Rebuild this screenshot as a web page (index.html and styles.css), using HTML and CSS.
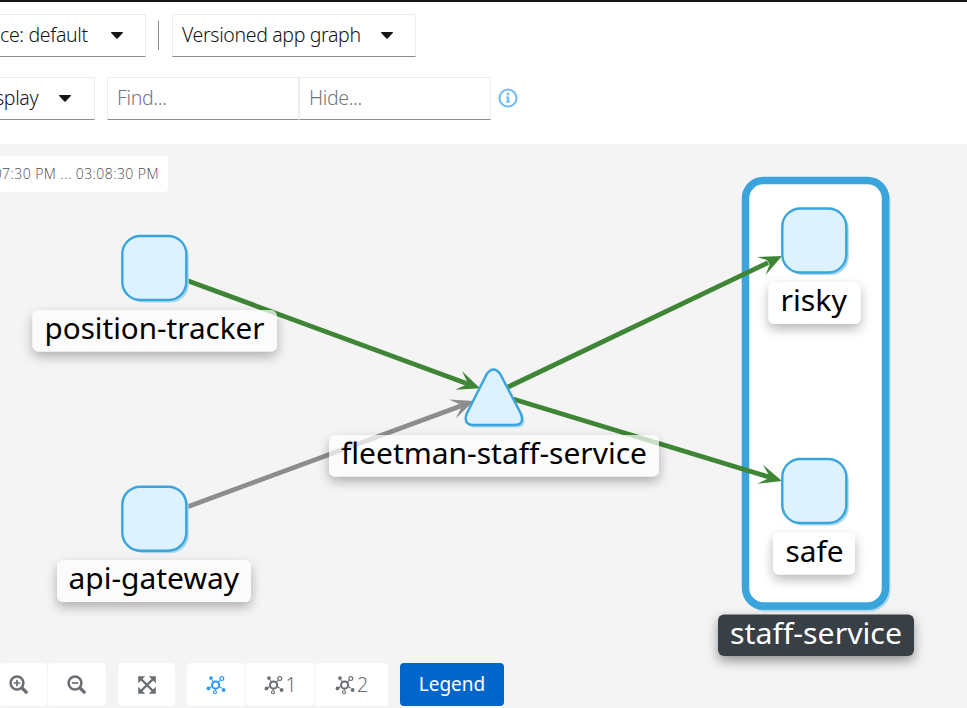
FILE: index.html
```html
<!DOCTYPE html>
<html lang="en">
<head>
<meta charset="utf-8">
<title>Graph</title>
<link rel="stylesheet" href="styles.css">
</head>
<body>
<svg class="defs" aria-hidden="true">
  <symbol id="caret" viewBox="0 0 12 7"><path d="M.6 0h10.8c.6 0 .8.6.4 1L6.6 6.5q-.6.6-1.2 0L.2 1C-.2.6 0 0 .6 0z" fill="currentColor"/></symbol>
  <symbol id="topology" viewBox="0 0 20 20">
    <g fill="none" stroke="currentColor">
      <circle cx="9.6" cy="10" r="3.6" stroke-width="2"/>
      <path d="M6 5l1.4 2M12.4 7.2l2-2M13 11.5l2.7 1.8M6.3 11.2l-3 1.6M9.3 14v1.5" stroke-width="1.1"/>
      <circle cx="15.8" cy="3.6" r="1.9" stroke-width="1.2"/>
      <circle cx="9" cy="17.2" r="1.5" stroke-width="1.1"/>
    </g>
    <g fill="currentColor"><circle cx="5" cy="3.1" r="1.9"/><circle cx="2.5" cy="13.4" r="1.9"/><circle cx="17.6" cy="15" r="1.9"/></g>
  </symbol>
</svg>
<header class="toolbar">
  <div class="row">
    <div class="control namespace"><span>ce: default</span><svg class="caret"><use href="#caret"/></svg></div>
    <i class="divider"></i>
    <div class="control graph-type"><span>Versioned app graph</span><svg class="caret"><use href="#caret"/></svg></div>
  </div>
  <div class="row">
    <div class="control display"><span>splay</span><svg class="caret"><use href="#caret"/></svg></div>
    <div class="control find"><span>Find...</span></div>
    <div class="control hide"><span>Hide...</span></div>
    <svg class="info" viewBox="0 0 20 20"><circle cx="10" cy="10" r="8.500" fill="none" stroke="currentColor" stroke-width="2.200"/><path d="M8.600 4.800h2.600v2.400H8.600zM8 8.400h3.200v4.800h1v1.500H7.800v-1.500h1V9.900H8z" fill="currentColor"/></svg>
  </div>
</header>
<main class="canvas">
  <svg class="graph" viewBox="0 144 967 564">
    <defs>
      <filter id="shadow" x="-20%" y="-50%" width="140%" height="240%"><feDropShadow dx="0" dy="5" stdDeviation="6" flood-color="#000" flood-opacity=".4"/></filter>
      <path id="arrow" d="M0 0L-23-10L-15-2.400V2.400L-23 10Z"/>
      <g id="node"><rect x="-29" y="-29" width="63.500" height="63.500" rx="18" fill="#add8ef"/><rect x="-32" y="-32" width="64" height="64" rx="18" fill="#def1ff" stroke="#39a5dc" stroke-width="2.400"/></g>
    </defs>
    <rect x="744.500" y="179.500" width="146" height="432" rx="21" fill="#add8f0"/>
    <rect x="745.500" y="180.500" width="140" height="425.500" rx="18" fill="#fff" stroke="#39a5dc" stroke-width="7.500"/>
    <g fill="none" stroke-width="4.800">
      <path d="M187 280.500L466 383.300M508 387L768 262.700M513 399L768 476.700" stroke="#3e8635"/>
      <path d="M187 507L460 406.200" stroke="#8b8d8f"/>
    </g>
    <g fill="#3e8635">
      <use href="#arrow" transform="translate(480 388.300) rotate(20.300)"/>
      <use href="#arrow" transform="translate(782 256) rotate(-25.600)"/>
      <use href="#arrow" transform="translate(782 481) rotate(17)"/>
    </g>
    <use href="#arrow" fill="#8b8d8f" transform="translate(474 401) rotate(-20.300)"/>
    <use href="#node" x="154.300" y="268"/>
    <use href="#node" x="154.300" y="518.700"/>
    <use href="#node" x="814.300" y="240.500"/>
    <use href="#node" x="814.300" y="491"/>
    <path d="M489.500 376Q495.500 367 501.500 376L523.500 415.500Q527 427.500 517 427.500H475Q465 427.500 468 416Z" fill="#add8ef"/>
    <path d="M486.800 374Q493.500 365 500.200 374L520.800 413.500Q525 425 514.500 425H472.500Q463 424 466.800 413.500Z" fill="#def1ff" stroke="#39a5dc" stroke-width="2.400"/>
    <g filter="url(#shadow)" fill="#fff" opacity=".72">
      <rect x="32.500" y="310" width="244.500" height="41.500" rx="6"/>
      <rect x="57" y="560" width="194" height="42" rx="6"/>
      <rect x="329" y="435" width="330" height="41.500" rx="6"/>
      <rect x="768.500" y="282" width="92" height="42" rx="6"/>
      <rect x="773" y="532.500" width="82" height="42" rx="6"/>
    </g>
    <rect x="718" y="614.500" width="196" height="41.500" rx="6" fill="#393f44" filter="url(#shadow)"/>
    <g class="labels">
      <text x="44.500" y="338.500" textLength="220" lengthAdjust="spacingAndGlyphs">position-tracker</text>
      <text x="68.500" y="588.500" textLength="170.500" lengthAdjust="spacingAndGlyphs">api-gateway</text>
      <text x="341" y="463.500" textLength="306" lengthAdjust="spacingAndGlyphs">fleetman-staff-service</text>
      <text x="780.500" y="310.500" textLength="66.500" lengthAdjust="spacingAndGlyphs">risky</text>
      <text x="785.500" y="561.500" textLength="58" lengthAdjust="spacingAndGlyphs">safe</text>
      <text class="light" x="730" y="643.500" textLength="172" lengthAdjust="spacingAndGlyphs">staff-service</text>
    </g>
  </svg>
  <div class="time">07:30 PM ... 03:08:30 PM</div>
  <div class="actions">
    <div class="tool zoom-in"><svg viewBox="0 0 20 20"><g fill="none" stroke="currentColor"><circle cx="8" cy="8" r="6.400" stroke-width="2.500"/><path d="M8 4.800v6.400M4.800 8h6.400" stroke-width="1.700"/><path d="M12.500 12.500l5.700 5.700" stroke-width="3.200"/></g></svg></div>
    <div class="tool zoom-out"><svg viewBox="0 0 20 20"><g fill="none" stroke="currentColor"><circle cx="8" cy="8" r="6.400" stroke-width="2.500"/><path d="M4.800 8h6.400" stroke-width="1.700"/><path d="M12.500 12.500l5.700 5.700" stroke-width="3.200"/></g></svg></div>
    <div class="tool fit"><svg viewBox="0 0 20 20"><path d="M4 4l12 12M16 4L4 16" stroke="currentColor" stroke-width="2.400"/><path d="M1.200 1.200h7L1.200 8.200zM18.800 1.200v7L11.800 1.200zM1.200 18.800v-7L8.200 18.800zM18.800 18.800h-7l7-7z" fill="currentColor"/></svg></div>
    <div class="tool layout active"><svg><use href="#topology"/></svg></div>
    <div class="tool layout1"><svg><use href="#topology"/></svg><span>1</span></div>
    <div class="tool layout2"><svg><use href="#topology"/></svg><span>2</span></div>
    <div class="legend">Legend</div>
  </div>
</main>
</body>
</html>
```
FILE: styles.css
```css
* { box-sizing: border-box; }
body {
  margin: 0;
  width: 967px;
  height: 708px;
  overflow: hidden;
  background: #fff;
  color: #151515;
  font: 300 19.5px/24px "Noto Sans", "Open Sans", sans-serif;
  letter-spacing: -0.35px;
}
svg { display: block; }
.defs { position: absolute; width: 0; height: 0; }
.toolbar {
  height: 144px;
  padding-top: 12px;
  border-top: 2px solid #151515;
  display: flex;
  flex-direction: column;
  gap: 20px;
}
.row { display: flex; height: 43px; }
.control {
  display: flex;
  align-items: center;
  justify-content: space-between;
  height: 43px;
  padding: 0 10px;
  border: 1px solid #ededed;
  border-bottom-color: #8a8d90;
  white-space: nowrap;
}
.control span { padding-bottom: 2px; }
.caret { width: 12px; height: 7px; margin-right: 12px; }
.namespace { width: 146px; padding-left: 0; border-left: 0; }
.display { width: 95px; padding-left: 0; border-left: 0; margin-right: 12px; }
.display .caret { margin-right: 13px; }
.display span { margin-left: -5px; }
.divider { width: 1px; height: 29px; margin: 7px 13px 0 12px; background: #8a8d90; }
.graph-type { width: 244px; padding-left: 9px; }
.find, .hide { width: 192px; padding-left: 9px; color: #72767b; }
.info { width: 20px; height: 20px; margin: 11px 0 0 7px; color: #73bcf7; }
.canvas {
  position: relative;
  height: 564px;
  padding-top: 12px;
  background: #f4f4f4;
  display: flex;
  flex-direction: column;
  justify-content: space-between;
}
.graph { position: absolute; left: 0; top: 0; width: 967px; height: 564px; }
.labels { font: 400 28.5px "Noto Sans", sans-serif; letter-spacing: 0; fill: #000; }
.light { fill: #fff; }
.time {
  position: relative;
  width: 168px;
  height: 36px;
  padding-right: 9px;
  border-radius: 0 4px 4px 0;
  background: #fff;
  color: #4b4d50;
  font: 300 14px/36px "Open Sans", sans-serif;
  letter-spacing: 0.43px;
  display: flex;
  justify-content: flex-end;
  white-space: nowrap;
}
.actions { position: relative; display: flex; height: 45px; }
.tool {
  height: 43px;
  display: flex;
  align-items: center;
  justify-content: center;
  gap: 2px;
  border-radius: 4px;
  background: #fff;
  color: #6a6e73;
}
.tool svg { width: 20px; height: 20px; }
.zoom-in { width: 47px; margin-right: 1px; padding-right: 9px; }
.zoom-out { width: 58px; margin-right: 12px; }
.fit { width: 57px; margin-right: 12px; }
.layout { width: 58px; margin-right: 1px; }
.layout1 { width: 68px; margin-right: 1px; }
.layout2 { width: 73px; margin-right: 12px; }
.active { color: #2b9af3; }
.legend {
  width: 104px;
  height: 43px;
  border-radius: 4px;
  background: #06c;
  color: #fff;
  font-weight: 400;
  font-size: 19px;
  letter-spacing: 0;
  line-height: 42px;
  text-align: center;
}
```
